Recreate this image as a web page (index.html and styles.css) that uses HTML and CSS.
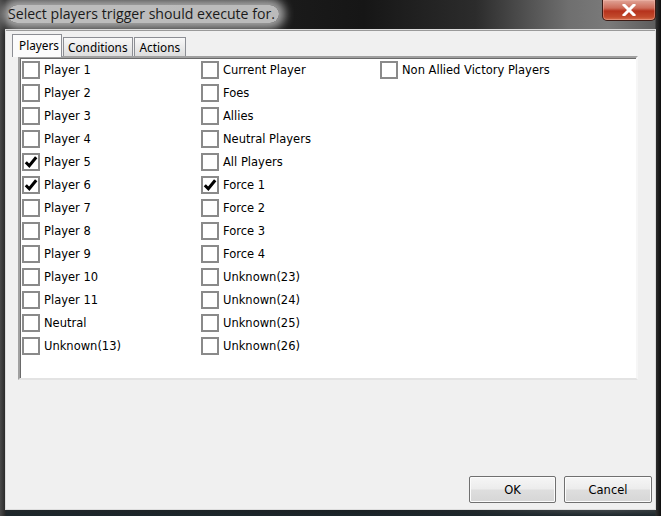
FILE: index.html
```html
<!DOCTYPE html>
<html>
<head>
<meta charset="utf-8">
<title>Select players</title>
<link rel="stylesheet" href="styles.css">
</head>
<body>
<div class="window">
  <div class="titlebar">
    <span class="title">Select players trigger should execute for.</span>
    <button class="close" aria-label="Close">
      <svg width="14" height="12" viewBox="0 0 14 12"><path d="M2 1 L12 11 M12 1 L2 11" stroke="#fff" stroke-width="3" stroke-linecap="square"/></svg>
    </button>
  </div>
  <div class="client">
    <div class="tabs">
      <div class="tab selected">Players</div>
      <div class="tab">Conditions</div>
      <div class="tab">Actions</div>
    </div>
    <div class="list">
      <label class="item"><span class="box"></span>Player 1</label>
      <label class="item"><span class="box"></span>Player 2</label>
      <label class="item"><span class="box"></span>Player 3</label>
      <label class="item"><span class="box"></span>Player 4</label>
      <label class="item"><span class="box checked"><svg width="14" height="14" viewBox="0 0 14 14"><path d="M1.8 7.2 L5.3 10.8 L12.2 2.2" fill="none" stroke="#000" stroke-width="3"/></svg></span>Player 5</label>
      <label class="item"><span class="box checked"><svg width="14" height="14" viewBox="0 0 14 14"><path d="M1.8 7.2 L5.3 10.8 L12.2 2.2" fill="none" stroke="#000" stroke-width="3"/></svg></span>Player 6</label>
      <label class="item"><span class="box"></span>Player 7</label>
      <label class="item"><span class="box"></span>Player 8</label>
      <label class="item"><span class="box"></span>Player 9</label>
      <label class="item"><span class="box"></span>Player 10</label>
      <label class="item"><span class="box"></span>Player 11</label>
      <label class="item"><span class="box"></span>Neutral</label>
      <label class="item"><span class="box"></span>Unknown(13)</label>
      <label class="item"><span class="box"></span>Current Player</label>
      <label class="item"><span class="box"></span>Foes</label>
      <label class="item"><span class="box"></span>Allies</label>
      <label class="item"><span class="box"></span>Neutral Players</label>
      <label class="item"><span class="box"></span>All Players</label>
      <label class="item"><span class="box checked"><svg width="14" height="14" viewBox="0 0 14 14"><path d="M1.8 7.2 L5.3 10.8 L12.2 2.2" fill="none" stroke="#000" stroke-width="3"/></svg></span>Force 1</label>
      <label class="item"><span class="box"></span>Force 2</label>
      <label class="item"><span class="box"></span>Force 3</label>
      <label class="item"><span class="box"></span>Force 4</label>
      <label class="item"><span class="box"></span>Unknown(23)</label>
      <label class="item"><span class="box"></span>Unknown(24)</label>
      <label class="item"><span class="box"></span>Unknown(25)</label>
      <label class="item"><span class="box"></span>Unknown(26)</label>
      <label class="item"><span class="box"></span>Non Allied Victory Players</label>
    </div>
    <div class="buttons">
      <button class="btn ok">OK</button>
      <button class="btn">Cancel</button>
    </div>
  </div>
</div>
</body>
</html>
```

FILE: styles.css
```css
html, body {
  margin: 0;
  padding: 0;
  background: #151515;
}

.window {
  width: 661px;
  height: 516px;
  display: flex;
  flex-direction: column;
  background:
    linear-gradient(90deg, #4a4a4a 0px, #2a2a2a 5px, transparent 6px, transparent 655px, #2e2e2e 656px, #0e0e0e 661px),
    linear-gradient(180deg, transparent 500px, #1c262b 516px),
    linear-gradient(90deg, #2a2a2a 0%, #161616 55%, #2c2c2c 72%, #6f6f6f 86%, #7a7a7a 92%, #5a5a5a 100%);
  font-family: "DejaVu Sans", sans-serif;
}

/* title bar */
.titlebar {
  height: 29px;
  flex: none;
  display: flex;
  justify-content: space-between;
  align-items: flex-start;
}

.title {
  margin: 5px 0 0 8px;
  padding: 0 4px 0 0;
  font-family: "Open Sans", "Noto Sans", sans-serif;
  font-size: 14.1px;
  line-height: 18px;
  color: #1a1a1a;
  background: rgba(215, 215, 215, 0.85);
  border-radius: 10px;
  box-shadow: 0 0 10px 6px rgba(210, 210, 210, 0.75);
}

.close {
  margin: 0 5px 0 0;
  width: 54px;
  height: 21px;
  padding: 0;
  border: 1px solid #3b1a14;
  border-top: none;
  border-radius: 0 0 5px 5px;
  background: linear-gradient(180deg, #e0a497 0%, #cd6c5a 40%, #b6321c 55%, #c24a2c 85%, #d8714f 100%);
  box-shadow: inset 0 0 0 1px rgba(255, 200, 190, 0.35);
  display: flex;
  align-items: center;
  justify-content: center;
}

/* client area */
.client {
  flex: none;
  height: 479px;
  margin: 0 5px 6px 5px;
  background: #f0f0f0;
  border: 1px solid #dcdcdc;
  box-shadow: inset 0 1px 0 #9a9a9a;
  display: flex;
  flex-direction: column;
  font-family: "Noto Sans", sans-serif;
}

.tabs {
  display: flex;
  align-items: flex-end;
  height: 23px;
  margin: 3px 0 0 6px;
  font-size: 11.8px;
  color: #000;
}

.tab {
  height: 19px;
  line-height: 18px;
  padding: 0 4px 0 4px;
  border: 1px solid #8c8e94;
  border-bottom: none;
  margin-right: 1px;
  background: linear-gradient(180deg, #f8f8f8 0%, #ebebeb 50%, #dddddd 100%);
  box-sizing: border-box;
}

.tab:last-child {
  padding: 0 5px 0 5px;
}

.tab.selected {
  height: 23px;
  line-height: 20px;
  padding: 0 5px 0 6px;
  background: #fbfbfb;
  width: 50px;
  margin-bottom: -1px;
  position: relative;
  z-index: 1;
}

/* checkbox list */
.list {
  margin: 0 17px 0 12px;
  height: 317px;
  background: #fff;
  border-style: solid;
  border-width: 2px;
  border-color: #a0a0a0 #f6f6f6 #e3e3e3 #a0a0a0;
  box-shadow: inset 1px 1px 0 #6a6a6a;
  padding: 3px 0 0 2px;
  display: grid;
  grid-template-columns: repeat(3, 179px);
  grid-template-rows: repeat(13, 23px);
  grid-auto-flow: column;
  font-family: "DejaVu Sans", sans-serif;
  font-size: 11.5px;
  color: #000;
}

.item {
  display: flex;
  align-items: center;
  gap: 4px;
  height: 18px;
  white-space: nowrap;
}

.box {
  width: 18px;
  height: 18px;
  box-sizing: border-box;
  border: 2px solid #8a8a8a;
  background: #fff;
  display: flex;
  align-items: center;
  justify-content: center;
  flex: none;
}

/* dialog buttons */
.buttons {
  margin: auto 3px 6px 0;
  display: flex;
  justify-content: flex-end;
  gap: 8px;
}

.btn {
  width: 88px;
  height: 27px;
  padding: 0;
  border: 1px solid #707070;
  border-radius: 2px;
  background: linear-gradient(180deg, #f6f6f6 0%, #ececec 48%, #dedede 52%, #d6d6d6 100%);
  box-shadow: inset 0 0 0 1px #fcfcfc;
  font-family: "DejaVu Sans", sans-serif;
  font-size: 11.5px;
  color: #000;
}

.btn.ok {
  width: 87px;
}
```
